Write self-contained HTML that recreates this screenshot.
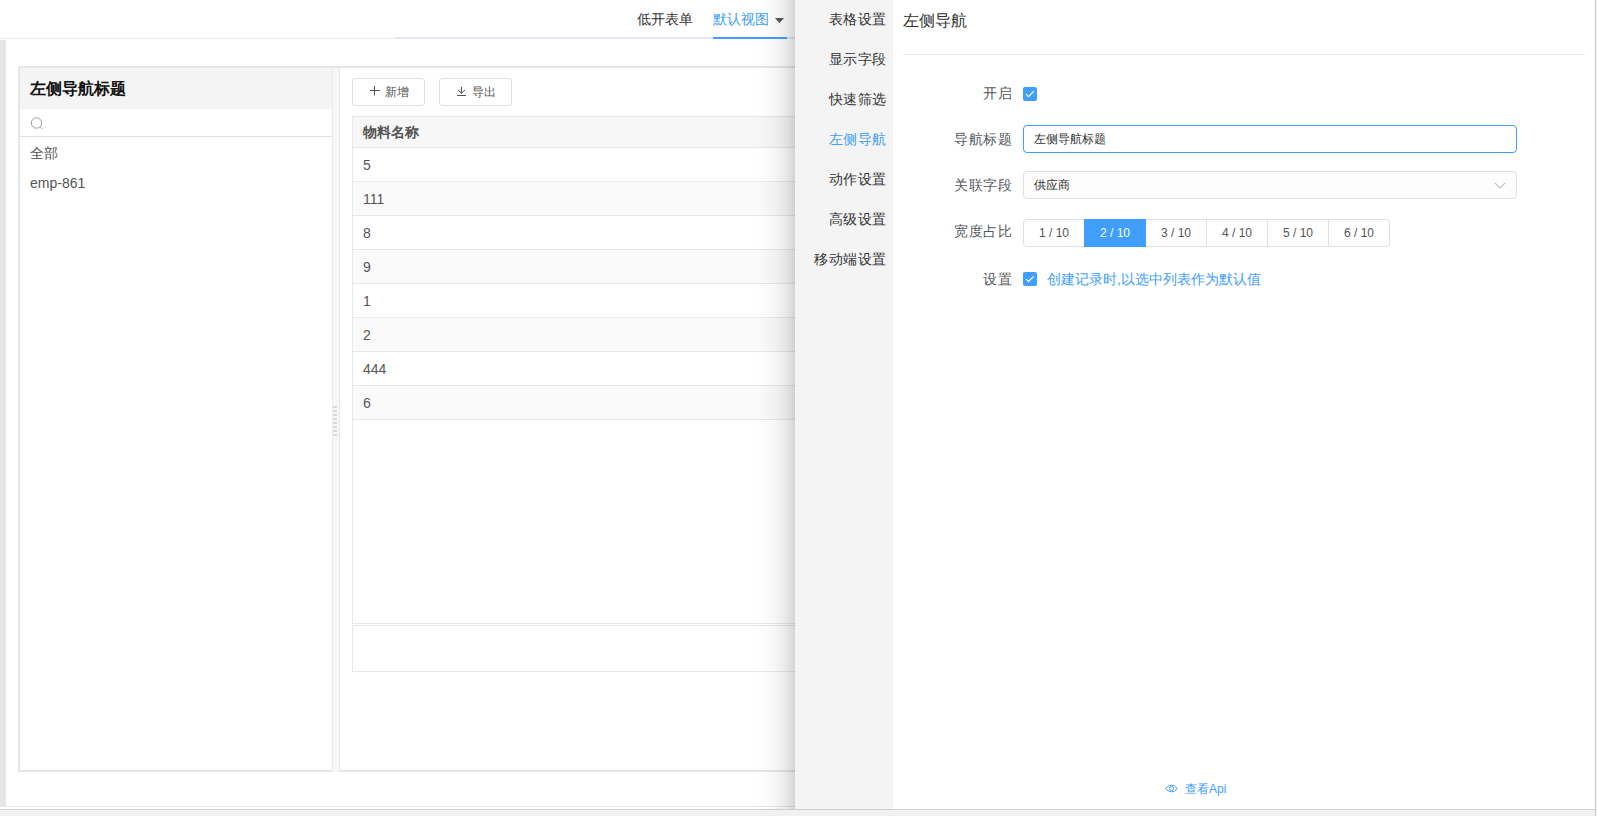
<!DOCTYPE html>
<html><head><meta charset="utf-8">
<style>
*{box-sizing:border-box;margin:0;padding:0}
html,body{width:1597px;height:816px;overflow:hidden;background:#fff;font-family:"Liberation Sans",sans-serif;color:#333}
.abs{position:absolute}
.tab{top:10px;font-size:14px;line-height:18px;color:#333;white-space:nowrap}
#nav{left:18px;top:68px;width:315px;height:702px;border-left:2px solid #e6e6e6;background:#fff}
#navhead{left:0;top:0;width:313px;height:41px;background:#f4f4f4}
#navtitle{left:10px;top:12px;font-size:16px;font-weight:bold;color:#111;line-height:18px;white-space:nowrap}
#search{left:0;top:41px;width:313px;height:28px;border-bottom:1px solid #dde1e6}
.navitem{left:10px;font-size:14px;color:#555;line-height:18px}
.btn{top:78px;height:28px;border:1px solid #dcdfe6;border-radius:3px;background:#fff;font-size:12px;color:#555;line-height:26px;white-space:nowrap}
.th{left:0;top:0;width:450px;height:31px;background:#f7f7f7;border-bottom:1px solid #e6e8eb;font-size:14px;font-weight:bold;color:#555;padding-left:10px;line-height:30px}
.tr{left:0;width:450px;height:34px;border-bottom:1px solid #e6e8eb;font-size:14px;color:#555;padding-left:10px;line-height:35px}
.tr.s{background:#fafafa}
/* drawer */
#drawer{left:795px;top:0;width:802px;height:809px;background:#fff;}
#menu{left:0;top:0;width:98px;height:809px;background:#f4f4f4}
.mi{right:6.5px;letter-spacing:0.5px;font-size:14px;color:#333;line-height:18px;white-space:nowrap}
.mi.on{color:#409eff}
#dtitle{left:108px;top:11px;font-size:16px;color:#333;line-height:20px;white-space:nowrap}
#divider{left:108px;top:54px;width:682px;height:1px;background:#e4e7ed}
.lbl{right:585px;letter-spacing:0.5px;font-size:14px;color:#555860;line-height:18px;white-space:nowrap}
.cb{width:14px;height:14px;background:#409eff;border-radius:2px}
.inp{left:228px;width:494px;height:28px;border:1px solid #dcdfe6;border-radius:4px;font-size:12px;color:#333;padding-left:10px;line-height:26px;white-space:nowrap}
.seg{top:219px;height:28px;border:1px solid #dcdfe6;border-left:none;font-size:12px;color:#555;text-align:center;line-height:26px;width:61px;white-space:nowrap}
#api{left:390px;top:781px;font-size:12px;color:#409eff;line-height:16px;white-space:nowrap}
</style></head><body>
<!-- top lines -->
<div class="abs" style="left:0;top:38px;width:395px;height:1px;background:#efe9e9"></div>
<div class="abs" style="left:395px;top:37px;width:400px;height:2px;background:#e4e7ed"></div>
<div class="abs" style="left:713px;top:37px;width:74px;height:2px;background:#409eff"></div>
<div class="abs tab" style="left:637px">低开表单</div>
<div class="abs tab" style="left:713px;color:#409eff">默认视图</div>
<svg class="abs" style="left:775px;top:18px" width="9" height="5" viewBox="0 0 9 5"><path d="M0 0 L9 0 L4.5 5Z" fill="#555"/></svg>
<!-- left gray strip -->
<div class="abs" style="left:0;top:40px;width:6px;height:766px;background:#e6e6e6"></div>
<!-- container top border -->
<div class="abs" style="left:18px;top:66px;width:780px;height:2px;background:#e6e6e6"></div>
<!-- container bottom border -->
<div class="abs" style="left:18px;top:770px;width:780px;height:2px;background:#e6e6e6"></div>

<div class="abs" id="nav">
  <div class="abs" id="navhead"><div class="abs" id="navtitle">左侧导航标题</div></div>
  <div class="abs" id="search">
    <svg class="abs" style="left:10px;top:8px" width="14" height="14" viewBox="0 0 14 14"><circle cx="6.5" cy="6" r="5.2" fill="none" stroke="#9a9ca3" stroke-width="1"/><path d="M10.3 10 L12.2 12" stroke="#9a9ca3" stroke-width="1"/></svg>
  </div>
  <div class="abs navitem" style="top:76px">全部</div>
  <div class="abs navitem" style="top:106px">emp-861</div>
</div>
<!-- splitter -->
<div class="abs" style="left:332px;top:68px;width:8px;height:704px;background:#f7f7f7;border-left:1px solid #ececec;border-right:1px solid #e8e8e8"></div>
<svg class="abs" style="left:333px;top:406px" width="4" height="30" viewBox="0 0 4 30">
<g fill="#d6d9de"><rect x="0" y="0" width="4" height="2"/><rect x="0" y="4" width="4" height="2"/><rect x="0" y="8" width="4" height="2"/><rect x="0" y="12" width="4" height="2"/><rect x="0" y="16" width="4" height="2"/><rect x="0" y="20" width="4" height="2"/><rect x="0" y="24" width="4" height="2"/><rect x="0" y="28" width="4" height="2"/></g></svg>

<div class="abs btn" style="left:352px;width:73px">
  <svg class="abs" style="left:17px;top:7px" width="10" height="10" viewBox="0 0 10 10"><path d="M4.5 0 V9.5 M0 4.5 H10" stroke="#555" stroke-width="1"/></svg>
  <span class="abs" style="left:32px;top:0">新增</span></div>
<div class="abs btn" style="left:439px;width:73px">
  <svg class="abs" style="left:17px;top:8px" width="10" height="10" viewBox="0 0 10 10"><path d="M4.5 0 V6.5 M1 2.8 L4.5 6.3 L8 2.8 M0 8.5 H9" stroke="#555" stroke-width="1" fill="none"/></svg>
  <span class="abs" style="left:32px;top:0">导出</span></div>
<div class="abs" style="left:352px;top:116px;width:450px;height:508px;border:1px solid #e6e8eb;border-right:none">
  <div class="abs th">物料名称</div>
  <div class="abs tr" style="top:31px">5</div>
  <div class="abs tr s" style="top:65px">111</div>
  <div class="abs tr" style="top:99px">8</div>
  <div class="abs tr s" style="top:133px">9</div>
  <div class="abs tr" style="top:167px">1</div>
  <div class="abs tr s" style="top:201px">2</div>
  <div class="abs tr" style="top:235px">444</div>
  <div class="abs tr s" style="top:269px">6</div>
</div>
<div class="abs" style="left:352px;top:625px;width:450px;height:47px;border:1px solid #e6e8eb;border-right:none"></div>
<!-- bottom -->
<div class="abs" style="left:0;top:806px;width:795px;height:1px;background:#e6e6e6"></div>
<div class="abs" style="left:0;top:809px;width:1597px;height:7px;background:#f1f1f1;border-top:1px solid #cfcfcf"></div>

<div class="abs" style="left:755px;top:0;width:40px;height:809px;background:linear-gradient(to right,rgba(0,0,0,0) 0px,rgba(0,0,0,0.012) 10px,rgba(0,0,0,0.03) 18px,rgba(0,0,0,0.06) 26px,rgba(0,0,0,0.1) 33px,rgba(0,0,0,0.15) 38px,rgba(0,0,0,0.17) 40px)"></div>
<div class="abs" id="drawer">
  <div class="abs" id="menu">
    <div class="abs mi" style="top:10px">表格设置</div>
    <div class="abs mi" style="top:50px">显示字段</div>
    <div class="abs mi" style="top:90px">快速筛选</div>
    <div class="abs mi on" style="top:130px">左侧导航</div>
    <div class="abs mi" style="top:170px">动作设置</div>
    <div class="abs mi" style="top:210px">高级设置</div>
    <div class="abs mi" style="top:250px">移动端设置</div>
  </div>
  <div class="abs" id="dtitle">左侧导航</div>
  <div class="abs" id="divider"></div>
  <div class="abs lbl" style="top:84px">开启</div>
  <div class="abs cb" style="left:228px;top:87px"><svg class="abs" style="left:0;top:0" width="14" height="14" viewBox="0 0 14 14"><path d="M3.1 7.2 L5.4 9.6 L10.9 4.1" stroke="#fff" stroke-width="1.15" fill="none"/></svg></div>
  <div class="abs lbl" style="top:130px">导航标题</div>
  <div class="abs inp" style="top:125px;border-color:#409eff">左侧导航标题</div>
  <div class="abs lbl" style="top:176px">关联字段</div>
  <div class="abs inp" style="top:171px;background:#fdfdfd">供应商
    <svg class="abs" style="left:470px;top:10px" width="12" height="7" viewBox="0 0 12 7"><path d="M0.7 0.9 L6 6 L11.3 0.9" stroke="#bcc0c7" stroke-width="1.1" fill="none"/></svg>
  </div>
  <div class="abs lbl" style="top:222px">宽度占比</div>
  <div class="abs seg" style="left:228px;width:62px;border-left:1px solid #dcdfe6;border-radius:4px 0 0 4px">1 / 10</div>
  <div class="abs seg" style="left:290px;background:#409eff;border-color:#409eff;color:#fff;box-shadow:-1px 0 0 0 #409eff">2 / 10</div>
  <div class="abs seg" style="left:351px">3 / 10</div>
  <div class="abs seg" style="left:412px">4 / 10</div>
  <div class="abs seg" style="left:473px">5 / 10</div>
  <div class="abs seg" style="left:534px;border-radius:0 4px 4px 0">6 / 10</div>
  <div class="abs lbl" style="top:270px">设置</div>
  <div class="abs cb" style="left:228px;top:272px"><svg class="abs" style="left:0;top:0" width="14" height="14" viewBox="0 0 14 14"><path d="M3.1 7.2 L5.4 9.6 L10.9 4.1" stroke="#fff" stroke-width="1.15" fill="none"/></svg></div>
  <div class="abs" style="left:252px;top:270px;font-size:14px;color:#409eff;line-height:18px;white-space:nowrap">创建记录时,以选中列表作为默认值</div>
  <svg class="abs" style="left:370px;top:784px" width="13" height="9" viewBox="0 0 13 9"><path d="M0.6 4.5 Q6.5 -2.2 12.4 4.5 Q6.5 11.2 0.6 4.5Z" fill="none" stroke="#409eff" stroke-width="1"/><circle cx="6.5" cy="4.5" r="2" fill="none" stroke="#409eff" stroke-width="1"/></svg>
  <div class="abs" id="api">查看Api</div>
</div>
<div class="abs" style="left:1596px;top:0;width:1px;height:816px;background:#f7f7f7"></div>
<div class="abs" style="left:1595px;top:0;width:1px;height:816px;background:#c8c8c8"></div>
</body></html>
